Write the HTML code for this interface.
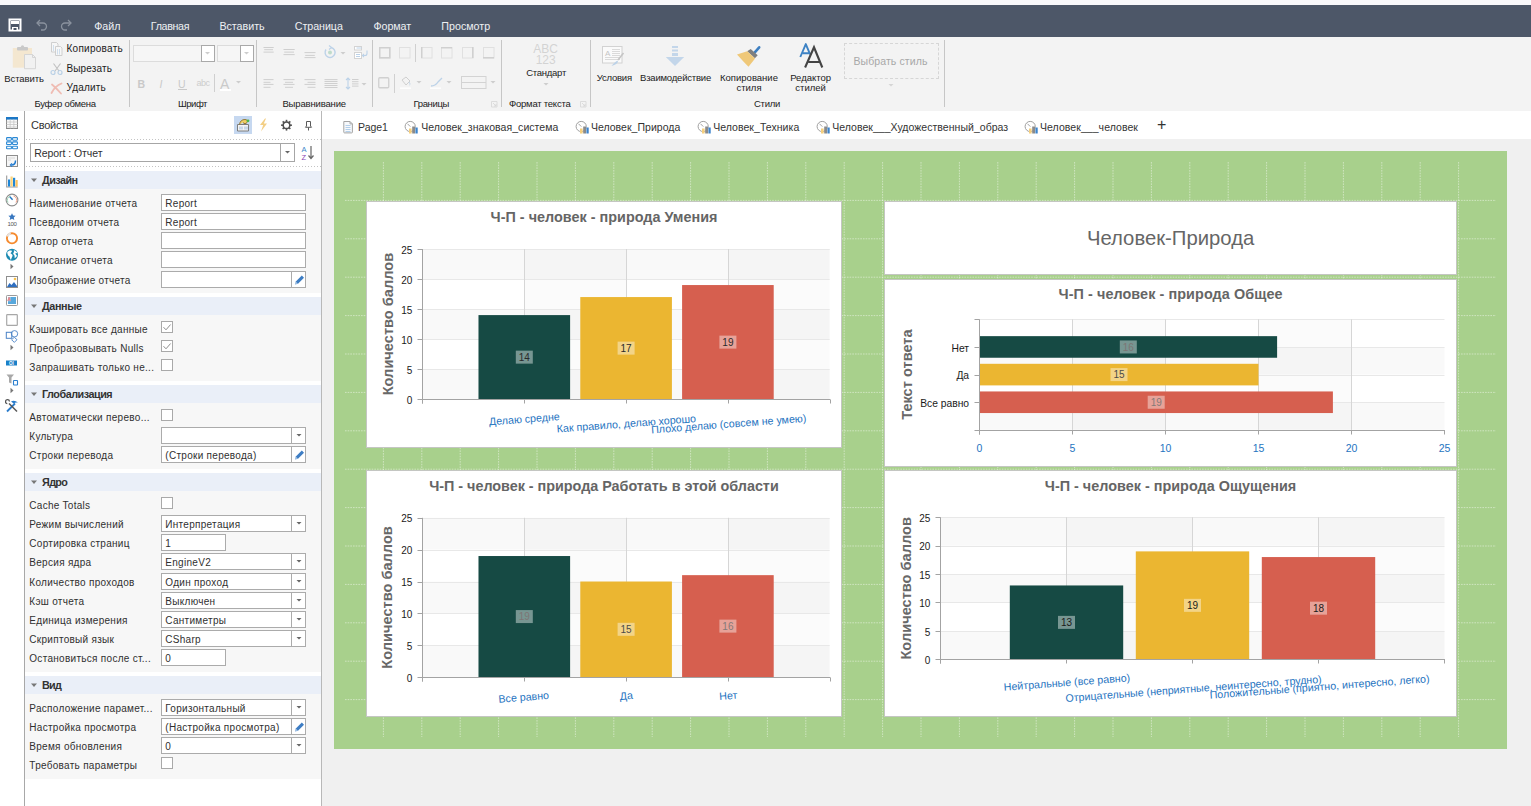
<!DOCTYPE html><html><head><meta charset="utf-8"><style>
*{box-sizing:border-box}
body{margin:0;width:1531px;height:806px;position:relative;overflow:hidden;background:#fff;font-family:"Liberation Sans", sans-serif;}
.a{position:absolute}
.t{position:absolute;white-space:nowrap;line-height:1}
svg text{font-family:"Liberation Sans", sans-serif}
</style></head><body>
<div class="a" style="left:0px;top:0px;width:1531px;height:5px;background:#f8f8fa"></div>
<div class="a" style="left:0px;top:5px;width:1531px;height:32px;background:#4d5768"></div>
<svg class="a" style="left:8px;top:18px;" width="14" height="14" viewBox="0 0 14 14"><path d="M1.5 1.5h11v11h-11z" fill="none" stroke="#fff" stroke-width="2"/><rect x="3" y="3" width="8" height="3" fill="#fff"/><rect x="4" y="9" width="6" height="4" fill="#fff"/><rect x="5.5" y="10" width="3" height="2" fill="#4d5768"/></svg>
<svg class="a" style="left:34px;top:18px;" width="14" height="14" viewBox="0 0 14 14"><path d="M3 5h6a3.5 3.5 0 0 1 0 7h-2" fill="none" stroke="#8a929e" stroke-width="1.3"/><path d="M6 2L3 5l3 3" fill="none" stroke="#8a929e" stroke-width="1.3"/></svg>
<svg class="a" style="left:60px;top:18px;" width="14" height="14" viewBox="0 0 14 14"><path d="M11 5H5a3.5 3.5 0 0 0 0 7h2" fill="none" stroke="#8a929e" stroke-width="1.3"/><path d="M8 2l3 3-3 3" fill="none" stroke="#8a929e" stroke-width="1.3"/></svg>
<div class="t" style="top:20.71px;font-size:10.7px;color:#eef0f3;letter-spacing:-0.070px;left:94.30px;">Файл</div>
<div class="t" style="top:20.71px;font-size:10.7px;color:#eef0f3;letter-spacing:-0.327px;left:150.80px;">Главная</div>
<div class="t" style="top:20.71px;font-size:10.7px;color:#eef0f3;letter-spacing:-0.014px;left:219.40px;">Вставить</div>
<div class="t" style="top:20.71px;font-size:10.7px;color:#eef0f3;letter-spacing:-0.057px;left:294.80px;">Страница</div>
<div class="t" style="top:20.71px;font-size:10.7px;color:#eef0f3;letter-spacing:-0.061px;left:373.50px;">Формат</div>
<div class="t" style="top:20.71px;font-size:10.7px;color:#eef0f3;letter-spacing:0.011px;left:441.30px;">Просмотр</div>
<div class="a" style="left:0px;top:37px;width:1531px;height:74px;background:#f3f3f3"></div>
<div class="a" style="left:129px;top:40px;width:1px;height:67px;background:#c6c6c6"></div>
<div class="a" style="left:256px;top:40px;width:1px;height:67px;background:#c6c6c6"></div>
<div class="a" style="left:372px;top:40px;width:1px;height:67px;background:#c6c6c6"></div>
<div class="a" style="left:501px;top:40px;width:1px;height:67px;background:#c6c6c6"></div>
<div class="a" style="left:590px;top:40px;width:1px;height:67px;background:#c6c6c6"></div>
<div class="a" style="left:944px;top:40px;width:1px;height:67px;background:#c6c6c6"></div>
<div class="t" style="top:74.22px;font-size:9.5px;color:#222;letter-spacing:-0.073px;left:4.20px;">Вставить</div>
<div class="t" style="top:43.60px;font-size:10px;color:#222;letter-spacing:0.266px;left:66.50px;">Копировать</div>
<div class="t" style="top:63.80px;font-size:10px;color:#222;letter-spacing:0.127px;left:66.50px;">Вырезать</div>
<div class="t" style="top:82.70px;font-size:10px;color:#222;letter-spacing:0.188px;left:66.50px;">Удалить</div>
<div class="t" style="top:99.02px;font-size:9.5px;color:#222;letter-spacing:-0.264px;left:34.40px;">Буфер обмена</div>
<div class="t" style="top:99.02px;font-size:9.5px;color:#222;letter-spacing:-0.453px;left:178.00px;">Шрифт</div>
<div class="t" style="top:99.02px;font-size:9.5px;color:#222;letter-spacing:-0.151px;left:282.40px;">Выравнивание</div>
<div class="t" style="top:99.02px;font-size:9.5px;color:#222;letter-spacing:-0.386px;left:413.60px;">Границы</div>
<div class="t" style="top:99.02px;font-size:9.5px;color:#222;letter-spacing:-0.228px;left:509.00px;">Формат текста</div>
<div class="t" style="top:99.02px;font-size:9.5px;color:#222;letter-spacing:-0.275px;left:754.00px;">Стили</div>
<div class="t" style="top:67.83px;font-size:9.5px;color:#222;letter-spacing:-0.261px;left:526.20px;">Стандарт</div>
<div class="t" style="top:73.33px;font-size:9.5px;color:#222;letter-spacing:-0.213px;left:596.80px;">Условия</div>
<div class="t" style="top:73.33px;font-size:9.5px;color:#222;letter-spacing:-0.198px;left:640.00px;">Взаимодействие</div>
<div class="t" style="top:73.33px;font-size:9.5px;color:#222;left:449.00px;width:600px;text-align:center;">Копирование</div>
<div class="t" style="top:83.02px;font-size:9.5px;color:#222;left:449.00px;width:600px;text-align:center;">стиля</div>
<div class="t" style="top:73.33px;font-size:9.5px;color:#222;left:510.60px;width:600px;text-align:center;">Редактор</div>
<div class="t" style="top:83.02px;font-size:9.5px;color:#222;left:510.60px;width:600px;text-align:center;">стилей</div>
<div class="t" style="top:55.78px;font-size:10.5px;color:#a8a8a8;letter-spacing:0.105px;left:853.40px;">Выбрать стиль</div>
<svg class="a" style="left:10px;top:44px;" width="28" height="28" viewBox="0 0 28 28"><rect x="2.8" y="4" width="19.2" height="19.7" fill="#f4e7d0"/><rect x="7" y="3" width="11" height="3.5" rx="1" fill="#c9c9c9"/><circle cx="12.5" cy="2.8" r="1.6" fill="#c9c9c9"/><path d="M14.5 10.5h8l3 3v11.2h-11z" fill="#f1f1f1" stroke="#d5d5d5" stroke-width="1"/><path d="M22.5 10.5v3h3" fill="none" stroke="#d5d5d5"/></svg>
<svg class="a" style="left:50px;top:41px;" width="14" height="15" viewBox="0 0 14 15"><path d="M1.5 1.5h5l1.5 1.5v8h-6.5z" fill="#f7f7f7" stroke="#cfcfcf"/><path d="M5.5 5.5h5l1.5 1.5v7.5h-6.5z" fill="#f7f7f7" stroke="#cfcfcf"/><path d="M3.5 4v6M7.5 8v5.5M9.5 8v5.5" stroke="#c5d8ea" stroke-width="0.8"/></svg>
<svg class="a" style="left:50px;top:62px;" width="14" height="14" viewBox="0 0 14 14"><path d="M3.5 1.5L9 9M10.5 1.5L5 9" stroke="#c0c0c0" stroke-width="1.1"/><circle cx="3" cy="10.5" r="2" fill="none" stroke="#b9d0e6" stroke-width="1.2"/><circle cx="10" cy="10.5" r="2" fill="none" stroke="#b9d0e6" stroke-width="1.2"/></svg>
<svg class="a" style="left:50px;top:82px;" width="13" height="13" viewBox="0 0 13 13"><path d="M1.5 11C4 6 7.5 3 11.5 1.5M2 2.5C5 5 8 8 11 11.5" stroke="#efbcb3" stroke-width="1.8" fill="none" stroke-linecap="round"/></svg>
<div class="a" style="left:132.5px;top:44.5px;width:82px;height:17px;background:#f6f6f6;border:1px solid #dcdcdc"></div>
<div class="a" style="left:201px;top:44.5px;width:14px;height:17px;background:#fff;border:1px solid #a9a9a9"></div>
<div class="a" style="left:216.5px;top:44.5px;width:37px;height:17px;background:#f6f6f6;border:1px solid #dcdcdc"></div>
<div class="a" style="left:240px;top:44.5px;width:14px;height:17px;background:#fff;border:1px solid #a9a9a9"></div>
<svg class="a" style="left:204px;top:51px;" width="8" height="5" viewBox="0 0 8 5"><path d="M1 1h5l-2.5 2.5z" fill="#cdcdcd"/></svg>
<svg class="a" style="left:243px;top:51px;" width="8" height="5" viewBox="0 0 8 5"><path d="M1 1h5l-2.5 2.5z" fill="#cdcdcd"/></svg>
<div class="t" style="top:79.08px;font-size:10.5px;color:#c9c9c9;font-weight:700;left:137.50px;">B</div>
<div class="t" style="top:79.08px;font-size:10.5px;color:#c9c9c9;left:159.50px;font-style:italic">I</div>
<div class="t" style="top:79.08px;font-size:10.5px;color:#c9c9c9;left:178.00px;">U</div>
<div class="a" style="left:178px;top:88.5px;width:9px;height:1px;background:#c9c9c9"></div>
<div class="t" style="top:79.35px;font-size:9px;color:#cdcdcd;letter-spacing:-0.505px;left:196.50px;">abc</div>
<div class="a" style="left:214px;top:74px;width:1px;height:18px;background:#cfcfcf"></div>
<div class="t" style="top:76.60px;font-size:14px;color:#cacaca;left:220.00px;">A</div>
<div class="a" style="left:220px;top:88.5px;width:11px;height:2px;background:#fff"></div>
<svg class="a" style="left:235px;top:80px;" width="8" height="5" viewBox="0 0 8 5"><path d="M1 1h5l-2.5 2.5z" fill="#cdcdcd"/></svg>
<svg class="a" style="left:262.5px;top:46px;" width="14" height="14" viewBox="0 0 14 14"><rect x="0.5" y="1.0" width="10.2" height="1" fill="#cfcfcf"/><rect x="1.2" y="3.2" width="8.8" height="1" fill="#cfcfcf"/><rect x="0.5" y="5.6" width="10.2" height="1" fill="#cfcfcf"/></svg>
<svg class="a" style="left:282.5px;top:46px;" width="14" height="14" viewBox="0 0 14 14"><rect x="0.5" y="3.0" width="11.2" height="1" fill="#cfcfcf"/><rect x="1.2" y="5.6" width="9.8" height="1" fill="#cfcfcf"/><rect x="0.5" y="8.1" width="11.2" height="1" fill="#cfcfcf"/></svg>
<svg class="a" style="left:303.5px;top:46px;" width="14" height="14" viewBox="0 0 14 14"><rect x="0.5" y="6.1" width="11.0" height="1" fill="#cfcfcf"/><rect x="1.2" y="8.9" width="9.6" height="1" fill="#cfcfcf"/><rect x="0.5" y="11.1" width="11.0" height="1" fill="#cfcfcf"/></svg>
<svg class="a" style="left:323px;top:45px;" width="14" height="14" viewBox="0 0 14 14"><path d="M3 4.5A5 5 0 1 0 8 2.5" fill="none" stroke="#bcd2e8" stroke-width="1.4"/><path d="M6 0.5l2.5 2-2.5 2" fill="none" stroke="#bcd2e8" stroke-width="1.2"/><circle cx="7" cy="7.5" r="2" fill="#bfdccb"/></svg>
<svg class="a" style="left:340px;top:51px;" width="7" height="5" viewBox="0 0 7 5"><path d="M0.5 1h5l-2.5 2.5z" fill="#cdcdcd"/></svg>
<svg class="a" style="left:353px;top:45px;" width="16" height="15" viewBox="0 0 16 15"><rect x="1.5" y="1.5" width="7" height="3.5" fill="#fff" stroke="#d3d3d3"/><rect x="1.5" y="7.5" width="7" height="6" fill="#fff" stroke="#d3d3d3"/><path d="M3 9.5h4M3 11.5h4M3.5 3h5" stroke="#bcd2e8"/><path d="M14 5.5v3a2 2 0 0 1-2 2h-2M11 9l-1.5 1.5L11 12" fill="none" stroke="#bcd2e8" stroke-width="1.1"/></svg>
<svg class="a" style="left:262.5px;top:77.5px;" width="14" height="12" viewBox="0 0 14 12"><rect x="0.5" y="1.1" width="10.0" height="1" fill="#cfcfcf"/><rect x="0.5" y="3.8" width="7.0" height="1" fill="#cfcfcf"/><rect x="0.5" y="5.9" width="10.0" height="1" fill="#cfcfcf"/><rect x="0.5" y="8.8" width="7.0" height="1" fill="#cfcfcf"/></svg>
<svg class="a" style="left:282.5px;top:77.5px;" width="14" height="12" viewBox="0 0 14 12"><rect x="0.5" y="1.1" width="11.0" height="1" fill="#cfcfcf"/><rect x="2.0" y="3.8" width="8.0" height="1" fill="#cfcfcf"/><rect x="0.5" y="5.9" width="11.0" height="1" fill="#cfcfcf"/><rect x="2.0" y="8.8" width="8.0" height="1" fill="#cfcfcf"/></svg>
<svg class="a" style="left:303.5px;top:77.5px;" width="14" height="12" viewBox="0 0 14 12"><rect x="0.5" y="1.1" width="11.0" height="1" fill="#cfcfcf"/><rect x="3.5" y="3.8" width="8.0" height="1" fill="#cfcfcf"/><rect x="0.5" y="5.9" width="11.0" height="1" fill="#cfcfcf"/><rect x="3.5" y="8.8" width="8.0" height="1" fill="#cfcfcf"/></svg>
<svg class="a" style="left:323.5px;top:77.5px;" width="15" height="12" viewBox="0 0 15 12"><rect x="0.5" y="1.1" width="13.0" height="1" fill="#cfcfcf"/><rect x="0.5" y="3.0" width="13.0" height="1" fill="#cfcfcf"/><rect x="0.5" y="5.0" width="13.0" height="1" fill="#cfcfcf"/><rect x="0.5" y="7.0" width="13.0" height="1" fill="#cfcfcf"/><rect x="0.5" y="9.0" width="13.0" height="1" fill="#cfcfcf"/></svg>
<svg class="a" style="left:344.5px;top:76.5px;" width="15" height="13" viewBox="0 0 15 13"><path d="M3 1v11M1 3l2-2 2 2M1 10l2 2 2-2" fill="none" stroke="#bcd2e8" stroke-width="1.1"/><rect x="7.0" y="2.0" width="6.5" height="1" fill="#cfcfcf"/><rect x="7.0" y="4.2" width="6.5" height="1" fill="#cfcfcf"/><rect x="7.0" y="6.4" width="6.5" height="1" fill="#cfcfcf"/><rect x="7.0" y="8.6" width="6.5" height="1" fill="#cfcfcf"/></svg>
<svg class="a" style="left:361px;top:82px;" width="7" height="5" viewBox="0 0 7 5"><path d="M0.5 1h5l-2.5 2.5z" fill="#cdcdcd"/></svg>
<svg class="a" style="left:379px;top:46.5px;" width="12" height="12" viewBox="0 0 12 12"><rect x="0.5" y="0.5" width="10.5" height="10.5" fill="none" stroke="#e0e0e0"/></svg>
<svg class="a" style="left:399px;top:46.5px;" width="12" height="12" viewBox="0 0 12 12"><rect x="0.5" y="0.5" width="10.5" height="10.5" fill="none" stroke="#e0e0e0"/></svg>
<svg class="a" style="left:421px;top:46.5px;" width="12" height="12" viewBox="0 0 12 12"><rect x="0.5" y="0.5" width="10.5" height="10.5" fill="none" stroke="#e0e0e0"/></svg>
<svg class="a" style="left:441px;top:46.5px;" width="12" height="12" viewBox="0 0 12 12"><rect x="0.5" y="0.5" width="10.5" height="10.5" fill="none" stroke="#e0e0e0"/></svg>
<svg class="a" style="left:462px;top:46.5px;" width="12" height="12" viewBox="0 0 12 12"><rect x="0.5" y="0.5" width="10.5" height="10.5" fill="none" stroke="#e0e0e0"/></svg>
<svg class="a" style="left:483px;top:46.5px;" width="12" height="12" viewBox="0 0 12 12"><rect x="0.5" y="0.5" width="10.5" height="10.5" fill="none" stroke="#e0e0e0"/></svg>
<svg class="a" style="left:379px;top:46.5px;" width="12" height="12" viewBox="0 0 12 12"><rect x="0.75" y="0.75" width="10" height="10" fill="none" stroke="#d0d0d0" stroke-width="1.5"/></svg>
<svg class="a" style="left:421px;top:46.5px;" width="12" height="12" viewBox="0 0 12 12"><path d="M0.75 0v11" stroke="#d0d0d0" stroke-width="1.5"/></svg>
<svg class="a" style="left:441px;top:46.5px;" width="12" height="12" viewBox="0 0 12 12"><path d="M0 0.75h11" stroke="#d0d0d0" stroke-width="1.5"/></svg>
<svg class="a" style="left:462px;top:46.5px;" width="12" height="12" viewBox="0 0 12 12"><path d="M10.75 0v11" stroke="#d0d0d0" stroke-width="1.5"/></svg>
<svg class="a" style="left:483px;top:46.5px;" width="12" height="12" viewBox="0 0 12 12"><path d="M0 10.75h11" stroke="#d0d0d0" stroke-width="1.5"/></svg>
<div class="a" style="left:415px;top:44px;width:1px;height:18px;background:#d0d0d0"></div>
<svg class="a" style="left:378px;top:76.5px;" width="12" height="12" viewBox="0 0 12 12"><rect x="0.75" y="0.75" width="10" height="10" rx="1" fill="none" stroke="#d0d0d0" stroke-width="1.3"/></svg>
<div class="a" style="left:394px;top:74px;width:1px;height:19px;background:#d0d0d0"></div>
<svg class="a" style="left:399px;top:75.5px;" width="14" height="14" viewBox="0 0 14 14"><path d="M3 4l4-3 4 4-4 4z" fill="none" stroke="#cfcfcf" stroke-width="1"/><path d="M10 6c1 1.5 1.5 2.5 0.5 3" fill="none" stroke="#c5d8ea"/><rect x="1" y="11.5" width="11" height="1.3" fill="#fff"/></svg>
<svg class="a" style="left:416px;top:80px;" width="7" height="5" viewBox="0 0 7 5"><path d="M0.5 1h5l-2.5 2.5z" fill="#cdcdcd"/></svg>
<svg class="a" style="left:429px;top:75.5px;" width="15" height="14" viewBox="0 0 15 14"><path d="M2 10c3 0 5-1 7-4l4-4" fill="none" stroke="#bcd2e8" stroke-width="1.3"/><rect x="1" y="11.5" width="11" height="1.3" fill="#fff"/></svg>
<svg class="a" style="left:446px;top:80px;" width="7" height="5" viewBox="0 0 7 5"><path d="M0.5 1h5l-2.5 2.5z" fill="#cdcdcd"/></svg>
<svg class="a" style="left:460px;top:76px;" width="27" height="13" viewBox="0 0 27 13"><rect x="1.5" y="0.5" width="24.5" height="12" fill="none" stroke="#d3d3d3"/><path d="M1.5 6.5h24.5" stroke="#d3d3d3" stroke-width="1"/></svg>
<svg class="a" style="left:490px;top:80px;" width="7" height="5" viewBox="0 0 7 5"><path d="M0.5 1h5l-2.5 2.5z" fill="#cdcdcd"/></svg>
<svg class="a" style="left:491px;top:101px;" width="7" height="7" viewBox="0 0 7 7"><path d="M0.5 0.5h5.5v5.5h-5.5z" fill="none" stroke="#d5d5d5" stroke-width="0.8"/><path d="M2 2l3 3M5 3v2h-2" fill="none" stroke="#d5d5d5" stroke-width="0.8"/></svg>
<svg class="a" style="left:580px;top:101px;" width="7" height="7" viewBox="0 0 7 7"><path d="M0.5 0.5h5.5v5.5h-5.5z" fill="none" stroke="#d5d5d5" stroke-width="0.8"/><path d="M2 2l3 3M5 3v2h-2" fill="none" stroke="#d5d5d5" stroke-width="0.8"/></svg>
<div class="t" style="top:42.90px;font-size:12px;color:#d3d3d3;left:245.70px;width:600px;text-align:center;">ABC</div>
<div class="t" style="top:54.10px;font-size:12px;color:#d3d3d3;left:245.70px;width:600px;text-align:center;">123</div>
<svg class="a" style="left:543px;top:82px;" width="7" height="5" viewBox="0 0 7 5"><path d="M0.5 1h5l-2.5 2.5z" fill="#cdcdcd"/></svg>
<svg class="a" style="left:600px;top:44px;" width="26" height="24" viewBox="0 0 26 24"><rect x="2.5" y="2.5" width="19.5" height="16.5" fill="#fafafa" stroke="#d2d2d2"/><text x="5" y="11.5" font-size="8" fill="#c5c5c5">A</text><path d="M12 5.5h8M12 7.5h8M12 9.5h8M12 11.5h8M5 13.5h15M5 15.5h15" stroke="#dadada" stroke-width="1"/><path d="M23.5 9L18 16" stroke="#c5c5c5" stroke-width="1.6"/><path d="M17.5 16.5c-1.5 1-3 2-6 5.5 3-1 5-1.5 6.5-4z" fill="#bcd2e8"/></svg>
<svg class="a" style="left:664px;top:44px;" width="22" height="24" viewBox="0 0 22 24"><rect x="8" y="2" width="6" height="2" fill="#c3d6ea"/><rect x="8" y="5.5" width="6" height="2" fill="#c3d6ea"/><rect x="8" y="9" width="6" height="3" fill="#c3d6ea"/><path d="M1.8 13h18.4L11 22z" fill="#c3d6ea"/></svg>
<svg class="a" style="left:735px;top:44px;" width="28" height="26" viewBox="0 0 28 26"><path d="M24.2 3.3L19.8 8.4" stroke="#3d7fc1" stroke-width="2.6" stroke-linecap="round"/><path d="M12.2 7.3l3.5-2.2 7 6.2-2.8 3z" fill="#7f7f7f"/><path d="M2 10.5l10.2-3.2 7.9 7.1-6.6 8.3C10 19.5 6 14.5 2 10.5z" fill="#efc879"/></svg>
<svg class="a" style="left:797px;top:42px;" width="28" height="28" viewBox="0 0 28 28"><path d="M3.3 15L8.8 2.1l4.3 10.3M5.8 11.2h6" fill="none" stroke="#3d82c4" stroke-width="1.9" stroke-linejoin="round"/><path d="M8.1 25.5L17 5.3l8.3 20.2M11.5 20h11" fill="none" stroke="#444" stroke-width="2.1"/></svg>
<div class="a" style="left:843.5px;top:42.5px;width:95px;height:36px;border:1px dashed #d6d6d6"></div>
<svg class="a" style="left:888px;top:83px;" width="7" height="5" viewBox="0 0 7 5"><path d="M0.5 1h5l-2.5 2.5z" fill="#d5d5d5"/></svg>
<div class="a" style="left:24px;top:111px;width:1px;height:695px;background:#a8a8a8"></div>
<div class="a" style="left:321px;top:111px;width:1px;height:695px;background:#b8b8b8"></div>
<div class="t" style="top:120.45px;font-size:11px;color:#333;letter-spacing:-0.239px;left:31.00px;">Свойства</div>
<div class="a" style="left:234px;top:116px;width:18px;height:18px;background:#c6d8f0"></div>
<svg class="a" style="left:236px;top:118px;" width="14" height="14" viewBox="0 0 14 14"><path d="M1.5 6.5h11v6.5h-11z" fill="#f4f4f4" stroke="#7d7d7d" stroke-width="1"/><path d="M4 8.5v3M6 8.5v3M9 8.5v3M11 8.5v3" stroke="#9bb9d9" stroke-width="1"/><path d="M3.5 6.5C4 3 6 1.5 9 1.5c2 0 3 1.5 2 3-1 1.5-3 1.5-4 0" fill="#f0cf63" stroke="#8a6d2a" stroke-width="0.9"/><circle cx="12" cy="2.8" r="1.4" fill="#4cb848"/></svg>
<svg class="a" style="left:257px;top:118px;" width="12" height="14" viewBox="0 0 12 14"><path d="M8 0.5L3 7h3.2L4 13.5 10 5.5H6.8L9 0.5z" fill="#f3cf86"/></svg>
<svg class="a" style="left:280px;top:119px;" width="13" height="13" viewBox="0 0 13 13"><g transform="translate(6.5 6.2)"><circle r="3.3" fill="none" stroke="#505050" stroke-width="1.5"/><rect x="-0.8" y="-5.4" width="1.6" height="2" fill="#505050" transform="rotate(0)"/><rect x="-0.8" y="-5.4" width="1.6" height="2" fill="#505050" transform="rotate(45)"/><rect x="-0.8" y="-5.4" width="1.6" height="2" fill="#505050" transform="rotate(90)"/><rect x="-0.8" y="-5.4" width="1.6" height="2" fill="#505050" transform="rotate(135)"/><rect x="-0.8" y="-5.4" width="1.6" height="2" fill="#505050" transform="rotate(180)"/><rect x="-0.8" y="-5.4" width="1.6" height="2" fill="#505050" transform="rotate(225)"/><rect x="-0.8" y="-5.4" width="1.6" height="2" fill="#505050" transform="rotate(270)"/><rect x="-0.8" y="-5.4" width="1.6" height="2" fill="#505050" transform="rotate(315)"/></g></svg>
<svg class="a" style="left:304px;top:120px;" width="9" height="12" viewBox="0 0 9 12"><path d="M2.5 1.5h4v4.5l1 1.3h-6l1-1.3z" fill="#fff" stroke="#5a5a5a" stroke-width="1"/><path d="M4.5 7.5v3" stroke="#5a5a5a" stroke-width="1"/></svg>
<svg class="a" style="left:25px;top:139px;" width="296" height="1" viewBox="0 0 296 1"><line x1="1" y1="0.5" x2="296" y2="0.5" stroke="#c4c4c4" stroke-width="1" stroke-dasharray="1,2"/></svg>
<svg class="a" style="left:25px;top:166px;" width="296" height="1" viewBox="0 0 296 1"><line x1="1" y1="0.5" x2="296" y2="0.5" stroke="#c4c4c4" stroke-width="1" stroke-dasharray="1,2"/></svg>
<div class="a" style="left:30px;top:143px;width:265px;height:19px;background:#fff;border:1px solid #a6a6a6"></div>
<div class="a" style="left:280px;top:143px;width:1px;height:19px;background:#a6a6a6"></div>
<svg class="a" style="left:284px;top:150px;" width="8" height="5" viewBox="0 0 8 5"><path d="M1 1h5l-2.5 2.5z" fill="#666"/></svg>
<div class="t" style="top:147.88px;font-size:10.5px;color:#303030;letter-spacing:-0.051px;left:34.20px;">Report : Отчет</div>
<svg class="a" style="left:300px;top:144px;" width="16" height="17" viewBox="0 0 16 17"><text x="1.5" y="8" font-size="7.5" fill="#3c86c9">A</text><text x="1.5" y="15.5" font-size="7.5" fill="#8a3fb5">Z</text><path d="M11 2v12M8.5 11.5L11 14.5l2.5-3" fill="none" stroke="#666" stroke-width="1.2"/></svg>
<div class="a" style="left:25px;top:171px;width:296px;height:18px;background:#eaeff8"></div>
<svg class="a" style="left:30px;top:177.8px;" width="8" height="5" viewBox="0 0 8 5"><path d="M1 0.5h6l-3 3.5z" fill="#777"/></svg>
<div class="t" style="top:174.62px;font-size:10.8px;color:#333;font-weight:700;letter-spacing:-0.536px;left:42.00px;">Дизайн</div>
<div class="a" style="left:25px;top:189px;width:296px;height:104px;background:#f7f7f7"></div>
<div class="t" style="top:198.60px;font-size:10px;color:#303030;letter-spacing:0.290px;left:29.30px;">Наименование отчета</div>
<div class="a" style="left:161px;top:194px;width:145px;height:17px;background:#fff;border:1px solid #ababab"></div>
<div class="t" style="top:198.60px;font-size:10px;color:#303030;letter-spacing:0.290px;left:165.30px;">Report</div>
<div class="t" style="top:217.60px;font-size:10px;color:#303030;letter-spacing:0.290px;left:29.30px;">Псевдоним отчета</div>
<div class="a" style="left:161px;top:213px;width:145px;height:17px;background:#fff;border:1px solid #ababab"></div>
<div class="t" style="top:217.60px;font-size:10px;color:#303030;letter-spacing:0.290px;left:165.30px;">Report</div>
<div class="t" style="top:236.60px;font-size:10px;color:#303030;letter-spacing:0.290px;left:29.30px;">Автор отчета</div>
<div class="a" style="left:161px;top:232px;width:145px;height:17px;background:#fff;border:1px solid #ababab"></div>
<div class="t" style="top:255.60px;font-size:10px;color:#303030;letter-spacing:0.290px;left:29.30px;">Описание отчета</div>
<div class="a" style="left:161px;top:251px;width:145px;height:17px;background:#fff;border:1px solid #ababab"></div>
<div class="t" style="top:275.60px;font-size:10px;color:#303030;letter-spacing:0.290px;left:29.30px;">Изображение отчета</div>
<div class="a" style="left:161px;top:271px;width:145px;height:17px;background:#fff;border:1px solid #ababab"></div>
<div class="a" style="left:291px;top:271px;width:1px;height:17px;background:#ababab"></div>
<svg class="a" style="left:292px;top:272.5px;" width="14" height="14" viewBox="0 0 14 14"><path d="M3 11.5l0.8-3 6-6 2.2 2.2-6 6z" fill="#3d7dc4"/><path d="M3 11.5l0.8-3 2.2 2.2z" fill="#fff" opacity="0.5"/></svg>
<div class="a" style="left:25px;top:297px;width:296px;height:18px;background:#eaeff8"></div>
<svg class="a" style="left:30px;top:303.8px;" width="8" height="5" viewBox="0 0 8 5"><path d="M1 0.5h6l-3 3.5z" fill="#777"/></svg>
<div class="t" style="top:300.62px;font-size:10.8px;color:#333;font-weight:700;letter-spacing:-0.378px;left:42.00px;">Данные</div>
<div class="a" style="left:25px;top:315px;width:296px;height:66px;background:#f7f7f7"></div>
<div class="t" style="top:324.60px;font-size:10px;color:#303030;letter-spacing:0.290px;left:29.30px;">Кэшировать все данные</div>
<div class="a" style="left:161px;top:321px;width:12px;height:12px;background:#fff;border:1px solid #a9a9a9"></div>
<svg class="a" style="left:161px;top:321px;" width="12" height="12" viewBox="0 0 12 12"><path d="M2.5 6.2l2.5 2.6 4.6-5.3" fill="none" stroke="#8e8e8e" stroke-width="1"/></svg>
<div class="t" style="top:343.60px;font-size:10px;color:#303030;letter-spacing:0.290px;left:29.30px;">Преобразовывать Nulls</div>
<div class="a" style="left:161px;top:340px;width:12px;height:12px;background:#fff;border:1px solid #a9a9a9"></div>
<svg class="a" style="left:161px;top:340px;" width="12" height="12" viewBox="0 0 12 12"><path d="M2.5 6.2l2.5 2.6 4.6-5.3" fill="none" stroke="#8e8e8e" stroke-width="1"/></svg>
<div class="t" style="top:362.60px;font-size:10px;color:#303030;letter-spacing:0.290px;left:29.30px;">Запрашивать только не...</div>
<div class="a" style="left:161px;top:359px;width:12px;height:12px;background:#fff;border:1px solid #a9a9a9"></div>
<div class="a" style="left:25px;top:385px;width:296px;height:18px;background:#eaeff8"></div>
<svg class="a" style="left:30px;top:391.8px;" width="8" height="5" viewBox="0 0 8 5"><path d="M1 0.5h6l-3 3.5z" fill="#777"/></svg>
<div class="t" style="top:388.62px;font-size:10.8px;color:#333;font-weight:700;letter-spacing:-0.473px;left:42.00px;">Глобализация</div>
<div class="a" style="left:25px;top:403px;width:296px;height:66px;background:#f7f7f7"></div>
<div class="t" style="top:412.60px;font-size:10px;color:#303030;letter-spacing:0.290px;left:29.30px;">Автоматически перево...</div>
<div class="a" style="left:161px;top:409px;width:12px;height:12px;background:#fff;border:1px solid #a9a9a9"></div>
<div class="t" style="top:431.60px;font-size:10px;color:#303030;letter-spacing:0.290px;left:29.30px;">Культура</div>
<div class="a" style="left:161px;top:427px;width:145px;height:17px;background:#fff;border:1px solid #ababab"></div>
<div class="a" style="left:291px;top:427px;width:1px;height:17px;background:#ababab"></div>
<svg class="a" style="left:294.5px;top:433px;" width="9" height="5" viewBox="0 0 9 5"><path d="M1.5 1h5l-2.5 2.5z" fill="#666"/></svg>
<div class="t" style="top:450.60px;font-size:10px;color:#303030;letter-spacing:0.290px;left:29.30px;">Строки перевода</div>
<div class="a" style="left:161px;top:446px;width:145px;height:17px;background:#fff;border:1px solid #ababab"></div>
<div class="a" style="left:291px;top:446px;width:1px;height:17px;background:#ababab"></div>
<svg class="a" style="left:292px;top:447.5px;" width="14" height="14" viewBox="0 0 14 14"><path d="M3 11.5l0.8-3 6-6 2.2 2.2-6 6z" fill="#3d7dc4"/><path d="M3 11.5l0.8-3 2.2 2.2z" fill="#fff" opacity="0.5"/></svg>
<div class="t" style="top:450.60px;font-size:10px;color:#303030;letter-spacing:0.290px;left:165.30px;">(Строки перевода)</div>
<div class="a" style="left:25px;top:473px;width:296px;height:18px;background:#eaeff8"></div>
<svg class="a" style="left:30px;top:479.8px;" width="8" height="5" viewBox="0 0 8 5"><path d="M1 0.5h6l-3 3.5z" fill="#777"/></svg>
<div class="t" style="top:476.62px;font-size:10.8px;color:#333;font-weight:700;letter-spacing:-0.628px;left:42.00px;">Ядро</div>
<div class="a" style="left:25px;top:491px;width:296px;height:181px;background:#f7f7f7"></div>
<div class="t" style="top:500.60px;font-size:10px;color:#303030;letter-spacing:0.290px;left:29.30px;">Cache Totals</div>
<div class="a" style="left:161px;top:497px;width:12px;height:12px;background:#fff;border:1px solid #a9a9a9"></div>
<div class="t" style="top:519.60px;font-size:10px;color:#303030;letter-spacing:0.290px;left:29.30px;">Режим вычислений</div>
<div class="a" style="left:161px;top:515px;width:145px;height:17px;background:#fff;border:1px solid #ababab"></div>
<div class="a" style="left:291px;top:515px;width:1px;height:17px;background:#ababab"></div>
<svg class="a" style="left:294.5px;top:521px;" width="9" height="5" viewBox="0 0 9 5"><path d="M1.5 1h5l-2.5 2.5z" fill="#666"/></svg>
<div class="t" style="top:519.60px;font-size:10px;color:#303030;letter-spacing:0.290px;left:165.30px;">Интерпретация</div>
<div class="t" style="top:538.60px;font-size:10px;color:#303030;letter-spacing:0.290px;left:29.30px;">Сортировка страниц</div>
<div class="a" style="left:161px;top:534px;width:65px;height:17px;background:#fff;border:1px solid #ababab"></div>
<div class="t" style="top:538.60px;font-size:10px;color:#303030;letter-spacing:0.290px;left:165.30px;">1</div>
<div class="t" style="top:557.60px;font-size:10px;color:#303030;letter-spacing:0.290px;left:29.30px;">Версия ядра</div>
<div class="a" style="left:161px;top:553px;width:145px;height:17px;background:#fff;border:1px solid #ababab"></div>
<div class="a" style="left:291px;top:553px;width:1px;height:17px;background:#ababab"></div>
<svg class="a" style="left:294.5px;top:559px;" width="9" height="5" viewBox="0 0 9 5"><path d="M1.5 1h5l-2.5 2.5z" fill="#666"/></svg>
<div class="t" style="top:557.60px;font-size:10px;color:#303030;letter-spacing:0.290px;left:165.30px;">EngineV2</div>
<div class="t" style="top:577.60px;font-size:10px;color:#303030;letter-spacing:0.290px;left:29.30px;">Количество проходов</div>
<div class="a" style="left:161px;top:573px;width:145px;height:17px;background:#fff;border:1px solid #ababab"></div>
<div class="a" style="left:291px;top:573px;width:1px;height:17px;background:#ababab"></div>
<svg class="a" style="left:294.5px;top:579px;" width="9" height="5" viewBox="0 0 9 5"><path d="M1.5 1h5l-2.5 2.5z" fill="#666"/></svg>
<div class="t" style="top:577.60px;font-size:10px;color:#303030;letter-spacing:0.290px;left:165.30px;">Один проход</div>
<div class="t" style="top:596.60px;font-size:10px;color:#303030;letter-spacing:0.290px;left:29.30px;">Кэш отчета</div>
<div class="a" style="left:161px;top:592px;width:145px;height:17px;background:#fff;border:1px solid #ababab"></div>
<div class="a" style="left:291px;top:592px;width:1px;height:17px;background:#ababab"></div>
<svg class="a" style="left:294.5px;top:598px;" width="9" height="5" viewBox="0 0 9 5"><path d="M1.5 1h5l-2.5 2.5z" fill="#666"/></svg>
<div class="t" style="top:596.60px;font-size:10px;color:#303030;letter-spacing:0.290px;left:165.30px;">Выключен</div>
<div class="t" style="top:615.60px;font-size:10px;color:#303030;letter-spacing:0.290px;left:29.30px;">Единица измерения</div>
<div class="a" style="left:161px;top:611px;width:145px;height:17px;background:#fff;border:1px solid #ababab"></div>
<div class="a" style="left:291px;top:611px;width:1px;height:17px;background:#ababab"></div>
<svg class="a" style="left:294.5px;top:617px;" width="9" height="5" viewBox="0 0 9 5"><path d="M1.5 1h5l-2.5 2.5z" fill="#666"/></svg>
<div class="t" style="top:615.60px;font-size:10px;color:#303030;letter-spacing:0.290px;left:165.30px;">Сантиметры</div>
<div class="t" style="top:634.60px;font-size:10px;color:#303030;letter-spacing:0.290px;left:29.30px;">Скриптовый язык</div>
<div class="a" style="left:161px;top:630px;width:145px;height:17px;background:#fff;border:1px solid #ababab"></div>
<div class="a" style="left:291px;top:630px;width:1px;height:17px;background:#ababab"></div>
<svg class="a" style="left:294.5px;top:636px;" width="9" height="5" viewBox="0 0 9 5"><path d="M1.5 1h5l-2.5 2.5z" fill="#666"/></svg>
<div class="t" style="top:634.60px;font-size:10px;color:#303030;letter-spacing:0.290px;left:165.30px;">CSharp</div>
<div class="t" style="top:653.60px;font-size:10px;color:#303030;letter-spacing:0.290px;left:29.30px;">Остановиться после ст...</div>
<div class="a" style="left:161px;top:649px;width:65px;height:17px;background:#fff;border:1px solid #ababab"></div>
<div class="t" style="top:653.60px;font-size:10px;color:#303030;letter-spacing:0.290px;left:165.30px;">0</div>
<div class="a" style="left:25px;top:676px;width:296px;height:18px;background:#eaeff8"></div>
<svg class="a" style="left:30px;top:682.8px;" width="8" height="5" viewBox="0 0 8 5"><path d="M1 0.5h6l-3 3.5z" fill="#777"/></svg>
<div class="t" style="top:679.62px;font-size:10.8px;color:#333;font-weight:700;letter-spacing:-0.766px;left:42.00px;">Вид</div>
<div class="a" style="left:25px;top:694px;width:296px;height:85px;background:#f7f7f7"></div>
<div class="t" style="top:703.60px;font-size:10px;color:#303030;letter-spacing:0.290px;left:29.30px;">Расположение парамет...</div>
<div class="a" style="left:161px;top:699px;width:145px;height:17px;background:#fff;border:1px solid #ababab"></div>
<div class="a" style="left:291px;top:699px;width:1px;height:17px;background:#ababab"></div>
<svg class="a" style="left:294.5px;top:705px;" width="9" height="5" viewBox="0 0 9 5"><path d="M1.5 1h5l-2.5 2.5z" fill="#666"/></svg>
<div class="t" style="top:703.60px;font-size:10px;color:#303030;letter-spacing:0.290px;left:165.30px;">Горизонтальный</div>
<div class="t" style="top:722.60px;font-size:10px;color:#303030;letter-spacing:0.290px;left:29.30px;">Настройка просмотра</div>
<div class="a" style="left:161px;top:718px;width:145px;height:17px;background:#fff;border:1px solid #ababab"></div>
<div class="a" style="left:291px;top:718px;width:1px;height:17px;background:#ababab"></div>
<svg class="a" style="left:292px;top:719.5px;" width="14" height="14" viewBox="0 0 14 14"><path d="M3 11.5l0.8-3 6-6 2.2 2.2-6 6z" fill="#3d7dc4"/><path d="M3 11.5l0.8-3 2.2 2.2z" fill="#fff" opacity="0.5"/></svg>
<div class="t" style="top:722.60px;font-size:10px;color:#303030;letter-spacing:0.290px;left:165.30px;">(Настройка просмотра)</div>
<div class="t" style="top:741.60px;font-size:10px;color:#303030;letter-spacing:0.290px;left:29.30px;">Время обновления</div>
<div class="a" style="left:161px;top:737px;width:145px;height:17px;background:#fff;border:1px solid #ababab"></div>
<div class="a" style="left:291px;top:737px;width:1px;height:17px;background:#ababab"></div>
<svg class="a" style="left:294.5px;top:743px;" width="9" height="5" viewBox="0 0 9 5"><path d="M1.5 1h5l-2.5 2.5z" fill="#666"/></svg>
<div class="t" style="top:741.60px;font-size:10px;color:#303030;letter-spacing:0.290px;left:165.30px;">0</div>
<div class="t" style="top:760.60px;font-size:10px;color:#303030;letter-spacing:0.290px;left:29.30px;">Требовать параметры</div>
<div class="a" style="left:161px;top:757px;width:12px;height:12px;background:#fff;border:1px solid #a9a9a9"></div>
<svg class="a" style="left:5px;top:116px;" width="14" height="14" viewBox="0 0 14 14"><rect x="1.5" y="1.5" width="11" height="11" fill="#fafafa" stroke="#8a8a8a" stroke-width="1"/><rect x="1" y="1" width="12" height="2.6" fill="#1b77c6"/><path d="M1.5 6h11M1.5 8.5h11M1.5 11h11M5.2 3.5v9M8.8 3.5v9" stroke="#c8c8c8" stroke-width="0.8"/></svg>
<svg class="a" style="left:5px;top:136px;" width="14" height="14" viewBox="0 0 14 14"><rect x="1.6" y="1.6" width="4.8" height="2.6" rx="0.6" fill="#fff" stroke="#2a88d4" stroke-width="1.1"/><rect x="1.6" y="5.9" width="4.8" height="2.6" rx="0.6" fill="#fff" stroke="#2a88d4" stroke-width="1.1"/><rect x="1.6" y="10.2" width="4.8" height="2.6" rx="0.6" fill="#fff" stroke="#2a88d4" stroke-width="1.1"/><rect x="7.6" y="1.6" width="4.8" height="2.6" rx="0.6" fill="#fff" stroke="#2a88d4" stroke-width="1.1"/><rect x="7.6" y="5.9" width="4.8" height="2.6" rx="0.6" fill="#fff" stroke="#2a88d4" stroke-width="1.1"/><rect x="7.6" y="10.2" width="4.8" height="2.6" rx="0.6" fill="#fff" stroke="#2a88d4" stroke-width="1.1"/></svg>
<svg class="a" style="left:5px;top:154px;" width="14" height="14" viewBox="0 0 14 14"><rect x="1.5" y="1.5" width="11" height="11" fill="#f6f6f6" stroke="#8e8e8e" stroke-width="1"/><path d="M3 4h7M3 6h3" stroke="#cfcfcf" stroke-width="0.8"/><path d="M10.5 6.5c0 3-1.5 4.5-4 4.5" fill="none" stroke="#1f7ad0" stroke-width="1.5"/><path d="M7 9.3l-1.6 1.7 1.6 1.6" fill="none" stroke="#1f7ad0" stroke-width="1.2"/></svg>
<svg class="a" style="left:5px;top:175px;" width="14" height="13" viewBox="0 0 14 13"><path d="M1.7 0.5v11.5h11" fill="none" stroke="#9a9a9a" stroke-width="1.1"/><rect x="3" y="4.5" width="2.2" height="7" fill="#1f86d6"/><rect x="5.5" y="1.5" width="2.2" height="10" fill="#fcd47c"/><rect x="8" y="2.8" width="2.2" height="8.7" fill="#1f86d6"/><rect x="10.5" y="5" width="2.2" height="6.5" fill="#fcc05a"/></svg>
<svg class="a" style="left:5px;top:193px;" width="14" height="14" viewBox="0 0 14 14"><circle cx="7" cy="7" r="5.9" fill="#fff" stroke="#8e8e8e" stroke-width="1.1"/><path d="M3 9.5A4.3 4.3 0 0 1 5.5 3" fill="none" stroke="#9fd4b8" stroke-width="1"/><path d="M8.5 3A4.3 4.3 0 0 1 11 9.5" fill="none" stroke="#f7a58c" stroke-width="1"/><path d="M4.8 3.8L7.6 6.8" stroke="#1f74c4" stroke-width="1.4"/></svg>
<svg class="a" style="left:5px;top:212px;" width="14" height="16" viewBox="0 0 14 16"><path d="M7 1.2l1.1 2.3 2.5 0.3-1.8 1.7 0.5 2.5L7 6.8 4.7 8l0.5-2.5-1.8-1.7 2.5-0.3z" fill="#3a78c0"/><text x="7" y="14.2" font-size="6" text-anchor="middle" fill="#555" letter-spacing="-0.3">100</text></svg>
<svg class="a" style="left:5px;top:231px;" width="14" height="14" viewBox="0 0 14 14"><circle cx="7" cy="7.3" r="5.1" fill="none" stroke="#f58a2e" stroke-width="1.9"/><path d="M2.3 5.5A5.1 5.1 0 0 1 5.8 2.3" fill="none" stroke="#e2e2e2" stroke-width="2"/></svg>
<svg class="a" style="left:5px;top:248px;" width="14" height="14" viewBox="0 0 14 14"><circle cx="7" cy="6.8" r="6" fill="#1a8ab2"/><path d="M2.2 4.2C3.5 2.5 5.5 2.2 6.8 2.8 7.2 4 6 4.5 5.5 5.2 6.5 5.8 7.8 6.5 7.5 8 7 9.5 6.2 10.5 6 12 5 11 4.8 9.5 4.5 8.5 3.5 8 2.5 7 2.2 4.2z" fill="#fff"/><path d="M8.8 2.2c1.5 0.3 2.8 1.3 3.5 2.6-0.8 0.5-1.5 0.3-2 1 0.6 0.8 1.5 1 1.6 2.2-0.6 1.2-1.5 1.8-2.3 2.2 0-1.2 0.2-2.5-0.5-3.2-0.8-0.5-1.2-1.5-0.6-2.2 0.6-0.6 0.5-1.6 0.3-2.6z" fill="#fff"/></svg>
<svg class="a" style="left:9px;top:263px;" width="6" height="7" viewBox="0 0 6 7"><path d="M1.5 0.8l3 2.7-3 2.7z" fill="#777"/></svg>
<svg class="a" style="left:5px;top:275px;" width="14" height="14" viewBox="0 0 14 14"><rect x="1.5" y="1.5" width="11" height="11" fill="#fff" stroke="#8e8e8e" stroke-width="1"/><circle cx="10" cy="4" r="1.3" fill="#f8c04a"/><path d="M2 12l2.5-4 2 2 2.5-3 3 4v1z" fill="#2f6fc0"/></svg>
<svg class="a" style="left:5px;top:294px;" width="14" height="13" viewBox="0 0 14 13"><rect x="1.5" y="1.5" width="11" height="10" rx="0.8" fill="#fff" stroke="#9a9a9a" stroke-width="1"/><rect x="3" y="3" width="8" height="7" fill="#58a8dc"/><path d="M2.8 7l1.3-3.8L5.4 7M3.3 5.8h1.6" fill="none" stroke="#f04848" stroke-width="0.9"/><rect x="2.5" y="2.5" width="3.5" height="5" fill="#fff" opacity="0.3"/></svg>
<svg class="a" style="left:5px;top:313px;" width="14" height="14" viewBox="0 0 14 14"><rect x="1.7" y="1.7" width="10.6" height="10.6" rx="0.6" fill="#fff" stroke="#a8a8a8" stroke-width="1.2"/></svg>
<svg class="a" style="left:5px;top:329px;" width="14" height="15" viewBox="0 0 14 15"><rect x="1.3" y="3.3" width="5.5" height="6" fill="none" stroke="#4a82c6" stroke-width="1"/><circle cx="9.5" cy="4.8" r="3.2" fill="none" stroke="#4a82c6" stroke-width="0.9"/><path d="M9.3 8.3l2.7 2.4-2.7 2.7-2.7-2.7z" fill="#fff" stroke="#4a82c6" stroke-width="0.9"/></svg>
<svg class="a" style="left:9px;top:344px;" width="6" height="7" viewBox="0 0 6 7"><path d="M1.5 0.8l3 2.7-3 2.7z" fill="#777"/></svg>
<svg class="a" style="left:5px;top:359px;" width="14" height="9" viewBox="0 0 14 9"><rect x="1" y="1.5" width="11" height="5" fill="#1a80c8"/><text x="6.5" y="6" font-size="4.5" font-weight="700" text-anchor="middle" fill="#fff">Ol</text></svg>
<svg class="a" style="left:5px;top:372px;" width="14" height="14" viewBox="0 0 14 14"><path d="M1.5 2.5h7.5l-2.5 3v6l-2.5-1v-5z" fill="#a8a8a8"/><rect x="8.5" y="8.5" width="4" height="4.5" rx="0.5" fill="#fff" stroke="#2a7fcf" stroke-width="1.1"/></svg>
<svg class="a" style="left:9px;top:387px;" width="6" height="7" viewBox="0 0 6 7"><path d="M1.5 0.8l3 2.7-3 2.7z" fill="#777"/></svg>
<svg class="a" style="left:5px;top:399px;" width="14" height="14" viewBox="0 0 14 14"><path d="M2 12.5l8-8" stroke="#2a7ccc" stroke-width="1.8"/><path d="M6 2.5c2-1.5 5-1 7 1.5-2-0.8-3-0.5-4 0.8z" fill="#2a7ccc"/><path d="M12 12.5L4 4.5" stroke="#555" stroke-width="1.4"/><path d="M4.5 2.5A2 2 0 1 0 2.3 4.7" fill="none" stroke="#555" stroke-width="1.3"/></svg>
<div class="a" style="left:322px;top:139px;width:1209px;height:667px;background:#f0f0f0"></div>
<div class="t" style="top:121.58px;font-size:10.5px;color:#333;letter-spacing:-0.135px;left:358.00px;">Page1</div>
<div class="t" style="top:121.58px;font-size:10.5px;color:#333;letter-spacing:0.046px;left:421.20px;">Человек_знаковая_система</div>
<div class="t" style="top:121.58px;font-size:10.5px;color:#333;letter-spacing:0.034px;left:590.90px;">Человек_Природа</div>
<div class="t" style="top:121.58px;font-size:10.5px;color:#333;letter-spacing:0.051px;left:713.20px;">Человек_Техника</div>
<div class="t" style="top:121.58px;font-size:10.5px;color:#333;letter-spacing:0.040px;left:832.20px;">Человек___Художественный_образ</div>
<div class="t" style="top:121.58px;font-size:10.5px;color:#333;letter-spacing:0.062px;left:1040.00px;">Человек___человек</div>
<svg class="a" style="left:342px;top:120px;" width="12" height="14" viewBox="0 0 12 14"><path d="M1.8 1.5h6.2l2.4 2.4v8.3a0.7 0.7 0 0 1-0.7 0.7H2.5a0.7 0.7 0 0 1-0.7-0.7z" fill="#f7f9fc" stroke="#a4a4a4" stroke-width="1"/><path d="M8 1.5v2.4h2.4" fill="none" stroke="#a4a4a4" stroke-width="0.9"/><path d="M3.5 5.5h5M3.5 7.5h5M3.5 9.5h5M3.5 11.5h5" stroke="#b3cfea" stroke-width="1"/></svg>
<svg class="a" style="left:404px;top:120px;" width="15" height="14" viewBox="0 0 15 14"><circle cx="6.2" cy="6.5" r="5.1" fill="#fff" stroke="#a0a0a0" stroke-width="1"/><path d="M3.5 3.8L6.3 6.6" stroke="#999" stroke-width="0.9"/><rect x="5" y="8.5" width="2.6" height="5" fill="#f6cf7d"/><rect x="8.2" y="6.5" width="2.8" height="7" fill="#8a8a8a"/><rect x="11.4" y="7.5" width="2.3" height="6" fill="#3c84cc"/></svg>
<svg class="a" style="left:574.5px;top:120px;" width="15" height="14" viewBox="0 0 15 14"><circle cx="6.2" cy="6.5" r="5.1" fill="#fff" stroke="#a0a0a0" stroke-width="1"/><path d="M3.5 3.8L6.3 6.6" stroke="#999" stroke-width="0.9"/><rect x="5" y="8.5" width="2.6" height="5" fill="#f6cf7d"/><rect x="8.2" y="6.5" width="2.8" height="7" fill="#8a8a8a"/><rect x="11.4" y="7.5" width="2.3" height="6" fill="#3c84cc"/></svg>
<svg class="a" style="left:696.5px;top:120px;" width="15" height="14" viewBox="0 0 15 14"><circle cx="6.2" cy="6.5" r="5.1" fill="#fff" stroke="#a0a0a0" stroke-width="1"/><path d="M3.5 3.8L6.3 6.6" stroke="#999" stroke-width="0.9"/><rect x="5" y="8.5" width="2.6" height="5" fill="#f6cf7d"/><rect x="8.2" y="6.5" width="2.8" height="7" fill="#8a8a8a"/><rect x="11.4" y="7.5" width="2.3" height="6" fill="#3c84cc"/></svg>
<svg class="a" style="left:816px;top:120px;" width="15" height="14" viewBox="0 0 15 14"><circle cx="6.2" cy="6.5" r="5.1" fill="#fff" stroke="#a0a0a0" stroke-width="1"/><path d="M3.5 3.8L6.3 6.6" stroke="#999" stroke-width="0.9"/><rect x="5" y="8.5" width="2.6" height="5" fill="#f6cf7d"/><rect x="8.2" y="6.5" width="2.8" height="7" fill="#8a8a8a"/><rect x="11.4" y="7.5" width="2.3" height="6" fill="#3c84cc"/></svg>
<svg class="a" style="left:1023.5px;top:120px;" width="15" height="14" viewBox="0 0 15 14"><circle cx="6.2" cy="6.5" r="5.1" fill="#fff" stroke="#a0a0a0" stroke-width="1"/><path d="M3.5 3.8L6.3 6.6" stroke="#999" stroke-width="0.9"/><rect x="5" y="8.5" width="2.6" height="5" fill="#f6cf7d"/><rect x="8.2" y="6.5" width="2.8" height="7" fill="#8a8a8a"/><rect x="11.4" y="7.5" width="2.3" height="6" fill="#3c84cc"/></svg>
<div class="t" style="top:117.40px;font-size:16px;color:#333;left:861.70px;width:600px;text-align:center;">+</div>
<div class="a" style="left:334px;top:151px;width:1173px;height:598px;background:#a8d08c"></div>
<svg class="a" style="left:334px;top:151px;" width="1173" height="598" viewBox="0 0 1173 598"><g stroke="#ffffff" stroke-opacity="0.45" stroke-width="1" stroke-dasharray="1.6,1.07"><line x1="49.4" y1="11.0" x2="49.4" y2="586.0"/><line x1="87.8" y1="11.0" x2="87.8" y2="586.0"/><line x1="126.2" y1="11.0" x2="126.2" y2="586.0"/><line x1="164.6" y1="11.0" x2="164.6" y2="586.0"/><line x1="203.0" y1="11.0" x2="203.0" y2="586.0"/><line x1="241.4" y1="11.0" x2="241.4" y2="586.0"/><line x1="279.8" y1="11.0" x2="279.8" y2="586.0"/><line x1="318.2" y1="11.0" x2="318.2" y2="586.0"/><line x1="356.6" y1="11.0" x2="356.6" y2="586.0"/><line x1="395.0" y1="11.0" x2="395.0" y2="586.0"/><line x1="433.4" y1="11.0" x2="433.4" y2="586.0"/><line x1="471.8" y1="11.0" x2="471.8" y2="586.0"/><line x1="510.2" y1="11.0" x2="510.2" y2="586.0"/><line x1="548.6" y1="11.0" x2="548.6" y2="586.0"/><line x1="587.0" y1="11.0" x2="587.0" y2="586.0"/><line x1="625.4" y1="11.0" x2="625.4" y2="586.0"/><line x1="663.8" y1="11.0" x2="663.8" y2="586.0"/><line x1="702.2" y1="11.0" x2="702.2" y2="586.0"/><line x1="740.6" y1="11.0" x2="740.6" y2="586.0"/><line x1="779.0" y1="11.0" x2="779.0" y2="586.0"/><line x1="817.4" y1="11.0" x2="817.4" y2="586.0"/><line x1="855.8" y1="11.0" x2="855.8" y2="586.0"/><line x1="894.2" y1="11.0" x2="894.2" y2="586.0"/><line x1="932.6" y1="11.0" x2="932.6" y2="586.0"/><line x1="971.0" y1="11.0" x2="971.0" y2="586.0"/><line x1="1009.4" y1="11.0" x2="1009.4" y2="586.0"/><line x1="1047.8" y1="11.0" x2="1047.8" y2="586.0"/><line x1="1086.2" y1="11.0" x2="1086.2" y2="586.0"/><line x1="1124.6" y1="11.0" x2="1124.6" y2="586.0"/><line x1="11.0" y1="49.4" x2="1162.0" y2="49.4"/><line x1="11.0" y1="87.8" x2="1162.0" y2="87.8"/><line x1="11.0" y1="126.2" x2="1162.0" y2="126.2"/><line x1="11.0" y1="164.6" x2="1162.0" y2="164.6"/><line x1="11.0" y1="203.0" x2="1162.0" y2="203.0"/><line x1="11.0" y1="241.4" x2="1162.0" y2="241.4"/><line x1="11.0" y1="279.8" x2="1162.0" y2="279.8"/><line x1="11.0" y1="318.2" x2="1162.0" y2="318.2"/><line x1="11.0" y1="356.6" x2="1162.0" y2="356.6"/><line x1="11.0" y1="395.0" x2="1162.0" y2="395.0"/><line x1="11.0" y1="433.4" x2="1162.0" y2="433.4"/><line x1="11.0" y1="471.8" x2="1162.0" y2="471.8"/><line x1="11.0" y1="510.2" x2="1162.0" y2="510.2"/><line x1="11.0" y1="548.6" x2="1162.0" y2="548.6"/></g></svg>
<div class="a" style="left:367px;top:202px;width:474px;height:245px;background:#fff;box-shadow:0 0 0 1px #c4c6c2"></div>
<div class="a" style="left:885px;top:202px;width:571px;height:72px;background:#fff;box-shadow:0 0 0 1px #c4c6c2"></div>
<div class="a" style="left:885px;top:280px;width:571px;height:186px;background:#fff;box-shadow:0 0 0 1px #c4c6c2"></div>
<div class="a" style="left:367px;top:471px;width:474px;height:245px;background:#fff;box-shadow:0 0 0 1px #c4c6c2"></div>
<div class="a" style="left:885px;top:471px;width:571px;height:245px;background:#fff;box-shadow:0 0 0 1px #c4c6c2"></div>
<div class="t" style="top:228.05px;font-size:20.3px;color:#666;left:870.60px;width:600px;text-align:center;">Человек-Природа</div>
<svg class="a" style="left:367px;top:202px" width="474" height="245" viewBox="367 202 474 245"><text x="604.00" y="222.10" text-anchor="middle" font-size="14.4" font-weight="700" fill="#656565" textLength="227" lengthAdjust="spacing">Ч-П - человек - природа Умения</text><rect x="422.50" y="249.00" width="407.20" height="30.04" fill="#000" fill-opacity="0.022"/><rect x="422.50" y="309.08" width="407.20" height="30.04" fill="#000" fill-opacity="0.022"/><rect x="422.50" y="369.16" width="407.20" height="30.04" fill="#000" fill-opacity="0.022"/><rect x="524.30" y="249.00" width="101.80" height="150.20" fill="#000" fill-opacity="0.016"/><rect x="727.90" y="249.00" width="101.80" height="150.20" fill="#000" fill-opacity="0.016"/><line x1="422.50" y1="249.50" x2="829.70" y2="249.50" stroke="#e8e8e8" stroke-width="1"/><line x1="422.50" y1="279.50" x2="829.70" y2="279.50" stroke="#e8e8e8" stroke-width="1"/><line x1="422.50" y1="309.50" x2="829.70" y2="309.50" stroke="#e8e8e8" stroke-width="1"/><line x1="422.50" y1="339.50" x2="829.70" y2="339.50" stroke="#e8e8e8" stroke-width="1"/><line x1="422.50" y1="369.50" x2="829.70" y2="369.50" stroke="#e8e8e8" stroke-width="1"/><line x1="524.50" y1="249.00" x2="524.50" y2="399.20" stroke="#d6d6d6" stroke-width="1"/><line x1="626.50" y1="249.00" x2="626.50" y2="399.20" stroke="#d6d6d6" stroke-width="1"/><line x1="728.50" y1="249.00" x2="728.50" y2="399.20" stroke="#d6d6d6" stroke-width="1"/><rect x="478.49" y="315.09" width="91.62" height="84.11" fill="#164a44"/><rect x="515.80" y="350.64" width="17" height="13" fill="#fff" fill-opacity="0.42"/><text x="524.30" y="360.74" text-anchor="middle" font-size="10" fill="#2a2a2a">14</text><rect x="580.29" y="297.06" width="91.62" height="102.14" fill="#ebb631"/><rect x="617.60" y="341.63" width="17" height="13" fill="#fff" fill-opacity="0.42"/><text x="626.10" y="351.73" text-anchor="middle" font-size="10" fill="#2a2a2a">17</text><rect x="682.09" y="285.05" width="91.62" height="114.15" fill="#d65f4f"/><rect x="719.40" y="335.62" width="17" height="13" fill="#fff" fill-opacity="0.42"/><text x="727.90" y="345.72" text-anchor="middle" font-size="10" fill="#2a2a2a">19</text><line x1="422.50" y1="249.00" x2="422.50" y2="403.50" stroke="#a3a3a3" stroke-width="1"/><line x1="417.50" y1="399.50" x2="830.20" y2="399.50" stroke="#a3a3a3" stroke-width="1"/><line x1="422.50" y1="399.50" x2="422.50" y2="403.50" stroke="#a3a3a3" stroke-width="1"/><line x1="524.50" y1="399.50" x2="524.50" y2="403.50" stroke="#a3a3a3" stroke-width="1"/><line x1="626.50" y1="399.50" x2="626.50" y2="403.50" stroke="#a3a3a3" stroke-width="1"/><line x1="728.50" y1="399.50" x2="728.50" y2="403.50" stroke="#a3a3a3" stroke-width="1"/><line x1="830.50" y1="399.50" x2="830.50" y2="403.50" stroke="#a3a3a3" stroke-width="1"/><line x1="417.50" y1="249.50" x2="422.50" y2="249.50" stroke="#a3a3a3" stroke-width="1"/><line x1="417.50" y1="279.50" x2="422.50" y2="279.50" stroke="#a3a3a3" stroke-width="1"/><line x1="417.50" y1="309.50" x2="422.50" y2="309.50" stroke="#a3a3a3" stroke-width="1"/><line x1="417.50" y1="339.50" x2="422.50" y2="339.50" stroke="#a3a3a3" stroke-width="1"/><line x1="417.50" y1="369.50" x2="422.50" y2="369.50" stroke="#a3a3a3" stroke-width="1"/><text x="412.40" y="403.80" text-anchor="end" font-size="10" fill="#1a1a1a">0</text><text x="412.40" y="373.76" text-anchor="end" font-size="10" fill="#1a1a1a">5</text><text x="412.40" y="343.72" text-anchor="end" font-size="10" fill="#1a1a1a">10</text><text x="412.40" y="313.68" text-anchor="end" font-size="10" fill="#1a1a1a">15</text><text x="412.40" y="283.64" text-anchor="end" font-size="10" fill="#1a1a1a">20</text><text x="412.40" y="253.60" text-anchor="end" font-size="10" fill="#1a1a1a">25</text><text transform="translate(392.90 324.10) rotate(-90)" x="0" y="0" text-anchor="middle" font-size="14.6" font-weight="700" fill="#686868">Количество баллов</text><text transform="translate(524.60 422.70) rotate(-4.3)" x="0" y="0" text-anchor="middle" font-size="10.67" fill="#1f74bf">Делаю средне</text><text transform="translate(626.60 427.30) rotate(-4.3)" x="0" y="0" text-anchor="middle" font-size="10.67" fill="#1f74bf">Как правило, делаю хорошо</text><text transform="translate(729.00 427.60) rotate(-4.3)" x="0" y="0" text-anchor="middle" font-size="10.67" fill="#1f74bf">Плохо делаю (совсем не умею)</text></svg>
<svg class="a" style="left:367px;top:471px" width="474" height="245" viewBox="367 471 474 245"><text x="604.00" y="491.00" text-anchor="middle" font-size="14.4" font-weight="700" fill="#656565" textLength="349.5" lengthAdjust="spacing">Ч-П - человек - природа Работать в этой области</text><rect x="422.50" y="517.80" width="407.20" height="31.86" fill="#000" fill-opacity="0.022"/><rect x="422.50" y="581.52" width="407.20" height="31.86" fill="#000" fill-opacity="0.022"/><rect x="422.50" y="645.24" width="407.20" height="31.86" fill="#000" fill-opacity="0.022"/><rect x="524.30" y="517.80" width="101.80" height="159.30" fill="#000" fill-opacity="0.016"/><rect x="727.90" y="517.80" width="101.80" height="159.30" fill="#000" fill-opacity="0.016"/><line x1="422.50" y1="518.50" x2="829.70" y2="518.50" stroke="#e8e8e8" stroke-width="1"/><line x1="422.50" y1="550.50" x2="829.70" y2="550.50" stroke="#e8e8e8" stroke-width="1"/><line x1="422.50" y1="582.50" x2="829.70" y2="582.50" stroke="#e8e8e8" stroke-width="1"/><line x1="422.50" y1="613.50" x2="829.70" y2="613.50" stroke="#e8e8e8" stroke-width="1"/><line x1="422.50" y1="645.50" x2="829.70" y2="645.50" stroke="#e8e8e8" stroke-width="1"/><line x1="524.50" y1="517.80" x2="524.50" y2="677.10" stroke="#d6d6d6" stroke-width="1"/><line x1="626.50" y1="517.80" x2="626.50" y2="677.10" stroke="#d6d6d6" stroke-width="1"/><line x1="728.50" y1="517.80" x2="728.50" y2="677.10" stroke="#d6d6d6" stroke-width="1"/><rect x="478.49" y="556.03" width="91.62" height="121.07" fill="#164a44"/><rect x="515.80" y="610.07" width="17" height="13" fill="#fff" fill-opacity="0.42"/><text x="524.30" y="620.17" text-anchor="middle" font-size="10" fill="#7d7575">19</text><rect x="580.29" y="581.52" width="91.62" height="95.58" fill="#ebb631"/><rect x="617.60" y="622.81" width="17" height="13" fill="#fff" fill-opacity="0.42"/><text x="626.10" y="632.91" text-anchor="middle" font-size="10" fill="#4a4a4a">15</text><rect x="682.09" y="575.15" width="91.62" height="101.95" fill="#d65f4f"/><rect x="719.40" y="619.62" width="17" height="13" fill="#fff" fill-opacity="0.42"/><text x="727.90" y="629.72" text-anchor="middle" font-size="10" fill="#857a78">16</text><line x1="422.50" y1="517.80" x2="422.50" y2="681.50" stroke="#a3a3a3" stroke-width="1"/><line x1="417.50" y1="677.50" x2="830.20" y2="677.50" stroke="#a3a3a3" stroke-width="1"/><line x1="422.50" y1="677.50" x2="422.50" y2="681.50" stroke="#a3a3a3" stroke-width="1"/><line x1="524.50" y1="677.50" x2="524.50" y2="681.50" stroke="#a3a3a3" stroke-width="1"/><line x1="626.50" y1="677.50" x2="626.50" y2="681.50" stroke="#a3a3a3" stroke-width="1"/><line x1="728.50" y1="677.50" x2="728.50" y2="681.50" stroke="#a3a3a3" stroke-width="1"/><line x1="830.50" y1="677.50" x2="830.50" y2="681.50" stroke="#a3a3a3" stroke-width="1"/><line x1="417.50" y1="518.50" x2="422.50" y2="518.50" stroke="#a3a3a3" stroke-width="1"/><line x1="417.50" y1="550.50" x2="422.50" y2="550.50" stroke="#a3a3a3" stroke-width="1"/><line x1="417.50" y1="582.50" x2="422.50" y2="582.50" stroke="#a3a3a3" stroke-width="1"/><line x1="417.50" y1="613.50" x2="422.50" y2="613.50" stroke="#a3a3a3" stroke-width="1"/><line x1="417.50" y1="645.50" x2="422.50" y2="645.50" stroke="#a3a3a3" stroke-width="1"/><text x="412.40" y="681.70" text-anchor="end" font-size="10" fill="#1a1a1a">0</text><text x="412.40" y="649.84" text-anchor="end" font-size="10" fill="#1a1a1a">5</text><text x="412.40" y="617.98" text-anchor="end" font-size="10" fill="#1a1a1a">10</text><text x="412.40" y="586.12" text-anchor="end" font-size="10" fill="#1a1a1a">15</text><text x="412.40" y="554.26" text-anchor="end" font-size="10" fill="#1a1a1a">20</text><text x="412.40" y="522.40" text-anchor="end" font-size="10" fill="#1a1a1a">25</text><text transform="translate(392.10 597.45) rotate(-90)" x="0" y="0" text-anchor="middle" font-size="14.6" font-weight="700" fill="#686868">Количество баллов</text><text transform="translate(524.00 700.80) rotate(-4.3)" x="0" y="0" text-anchor="middle" font-size="10.67" fill="#1f74bf">Все равно</text><text transform="translate(626.60 699.40) rotate(-4.3)" x="0" y="0" text-anchor="middle" font-size="10.67" fill="#1f74bf">Да</text><text transform="translate(728.60 699.40) rotate(-4.3)" x="0" y="0" text-anchor="middle" font-size="10.67" fill="#1f74bf">Нет</text></svg>
<svg class="a" style="left:885px;top:471px" width="571" height="245" viewBox="885 471 571 245"><text x="1170.50" y="491.00" text-anchor="middle" font-size="14.4" font-weight="700" fill="#656565" textLength="251.5" lengthAdjust="spacing">Ч-П - человек - природа Ощущения</text><rect x="940.50" y="517.30" width="504.00" height="28.40" fill="#000" fill-opacity="0.022"/><rect x="940.50" y="574.10" width="504.00" height="28.40" fill="#000" fill-opacity="0.022"/><rect x="940.50" y="630.90" width="504.00" height="28.40" fill="#000" fill-opacity="0.022"/><rect x="1066.50" y="517.30" width="126.00" height="142.00" fill="#000" fill-opacity="0.016"/><rect x="1318.50" y="517.30" width="126.00" height="142.00" fill="#000" fill-opacity="0.016"/><line x1="940.50" y1="517.50" x2="1444.50" y2="517.50" stroke="#e8e8e8" stroke-width="1"/><line x1="940.50" y1="546.50" x2="1444.50" y2="546.50" stroke="#e8e8e8" stroke-width="1"/><line x1="940.50" y1="574.50" x2="1444.50" y2="574.50" stroke="#e8e8e8" stroke-width="1"/><line x1="940.50" y1="602.50" x2="1444.50" y2="602.50" stroke="#e8e8e8" stroke-width="1"/><line x1="940.50" y1="631.50" x2="1444.50" y2="631.50" stroke="#e8e8e8" stroke-width="1"/><line x1="1066.50" y1="517.30" x2="1066.50" y2="659.30" stroke="#d6d6d6" stroke-width="1"/><line x1="1192.50" y1="517.30" x2="1192.50" y2="659.30" stroke="#d6d6d6" stroke-width="1"/><line x1="1318.50" y1="517.30" x2="1318.50" y2="659.30" stroke="#d6d6d6" stroke-width="1"/><rect x="1009.80" y="585.46" width="113.40" height="73.84" fill="#164a44"/><rect x="1058.00" y="615.88" width="17" height="13" fill="#fff" fill-opacity="0.42"/><text x="1066.50" y="625.98" text-anchor="middle" font-size="10" fill="#1a1a1a">13</text><rect x="1135.80" y="551.38" width="113.40" height="107.92" fill="#ebb631"/><rect x="1184.00" y="598.84" width="17" height="13" fill="#fff" fill-opacity="0.42"/><text x="1192.50" y="608.94" text-anchor="middle" font-size="10" fill="#1a1a1a">19</text><rect x="1261.80" y="557.06" width="113.40" height="102.24" fill="#d65f4f"/><rect x="1310.00" y="601.68" width="17" height="13" fill="#fff" fill-opacity="0.42"/><text x="1318.50" y="611.78" text-anchor="middle" font-size="10" fill="#1a1a1a">18</text><line x1="940.50" y1="517.30" x2="940.50" y2="663.50" stroke="#a3a3a3" stroke-width="1"/><line x1="935.50" y1="659.50" x2="1445.00" y2="659.50" stroke="#a3a3a3" stroke-width="1"/><line x1="940.50" y1="659.50" x2="940.50" y2="663.50" stroke="#a3a3a3" stroke-width="1"/><line x1="1066.50" y1="659.50" x2="1066.50" y2="663.50" stroke="#a3a3a3" stroke-width="1"/><line x1="1192.50" y1="659.50" x2="1192.50" y2="663.50" stroke="#a3a3a3" stroke-width="1"/><line x1="1318.50" y1="659.50" x2="1318.50" y2="663.50" stroke="#a3a3a3" stroke-width="1"/><line x1="1444.50" y1="659.50" x2="1444.50" y2="663.50" stroke="#a3a3a3" stroke-width="1"/><line x1="935.50" y1="517.50" x2="940.50" y2="517.50" stroke="#a3a3a3" stroke-width="1"/><line x1="935.50" y1="546.50" x2="940.50" y2="546.50" stroke="#a3a3a3" stroke-width="1"/><line x1="935.50" y1="574.50" x2="940.50" y2="574.50" stroke="#a3a3a3" stroke-width="1"/><line x1="935.50" y1="602.50" x2="940.50" y2="602.50" stroke="#a3a3a3" stroke-width="1"/><line x1="935.50" y1="631.50" x2="940.50" y2="631.50" stroke="#a3a3a3" stroke-width="1"/><text x="930.40" y="663.90" text-anchor="end" font-size="10" fill="#1a1a1a">0</text><text x="930.40" y="635.50" text-anchor="end" font-size="10" fill="#1a1a1a">5</text><text x="930.40" y="607.10" text-anchor="end" font-size="10" fill="#1a1a1a">10</text><text x="930.40" y="578.70" text-anchor="end" font-size="10" fill="#1a1a1a">15</text><text x="930.40" y="550.30" text-anchor="end" font-size="10" fill="#1a1a1a">20</text><text x="930.40" y="521.90" text-anchor="end" font-size="10" fill="#1a1a1a">25</text><text transform="translate(910.50 588.30) rotate(-90)" x="0" y="0" text-anchor="middle" font-size="14.6" font-weight="700" fill="#686868">Количество баллов</text><text transform="translate(1067.20 686.00) rotate(-4.3)" x="0" y="0" text-anchor="middle" font-size="10.67" fill="#1f74bf">Нейтральные (все равно)</text><text transform="translate(1193.80 692.30) rotate(-4.3)" x="0" y="0" text-anchor="middle" font-size="10.67" fill="#1f74bf">Отрицательные (неприятные, неинтересно, трудно)</text><text transform="translate(1319.80 690.50) rotate(-4.3)" x="0" y="0" text-anchor="middle" font-size="10.67" fill="#1f74bf">Положительные (приятно, интересно, легко)</text></svg>
<svg class="a" style="left:885px;top:280px" width="571" height="186" viewBox="885 280 571 186"><text x="1170.50" y="299.20" text-anchor="middle" font-size="14.4" font-weight="700" fill="#656565" textLength="224" lengthAdjust="spacing">Ч-П - человек - природа Общее</text><rect x="979.50" y="346.95" width="465.00" height="27.65" fill="#000" fill-opacity="0.022"/><rect x="979.50" y="402.25" width="465.00" height="27.65" fill="#000" fill-opacity="0.022"/><rect x="1072.50" y="319.30" width="93.00" height="110.60" fill="#000" fill-opacity="0.016"/><rect x="1258.50" y="319.30" width="93.00" height="110.60" fill="#000" fill-opacity="0.016"/><line x1="979.50" y1="319.50" x2="1444.50" y2="319.50" stroke="#e8e8e8" stroke-width="1"/><line x1="979.50" y1="347.50" x2="1444.50" y2="347.50" stroke="#e8e8e8" stroke-width="1"/><line x1="979.50" y1="375.50" x2="1444.50" y2="375.50" stroke="#e8e8e8" stroke-width="1"/><line x1="979.50" y1="402.50" x2="1444.50" y2="402.50" stroke="#e8e8e8" stroke-width="1"/><line x1="1072.50" y1="319.30" x2="1072.50" y2="429.90" stroke="#d6d6d6" stroke-width="1"/><line x1="1165.50" y1="319.30" x2="1165.50" y2="429.90" stroke="#d6d6d6" stroke-width="1"/><line x1="1258.50" y1="319.30" x2="1258.50" y2="429.90" stroke="#d6d6d6" stroke-width="1"/><line x1="1351.50" y1="319.30" x2="1351.50" y2="429.90" stroke="#d6d6d6" stroke-width="1"/><rect x="979.50" y="336.15" width="297.60" height="21.60" fill="#164a44"/><rect x="1119.80" y="340.45" width="17" height="13" fill="#fff" fill-opacity="0.42"/><text x="1128.30" y="350.55" text-anchor="middle" font-size="10" fill="#7d7575">16</text><rect x="979.50" y="363.80" width="279.00" height="21.60" fill="#ebb631"/><rect x="1110.50" y="368.10" width="17" height="13" fill="#fff" fill-opacity="0.42"/><text x="1119.00" y="378.20" text-anchor="middle" font-size="10" fill="#4a4a4a">15</text><rect x="979.50" y="391.45" width="353.40" height="21.60" fill="#d65f4f"/><rect x="1147.70" y="395.75" width="17" height="13" fill="#fff" fill-opacity="0.42"/><text x="1156.20" y="405.85" text-anchor="middle" font-size="10" fill="#857a78">19</text><line x1="979.50" y1="319.30" x2="979.50" y2="434.50" stroke="#a3a3a3" stroke-width="1"/><line x1="974.50" y1="430.50" x2="1445.00" y2="430.50" stroke="#a3a3a3" stroke-width="1"/><line x1="974.50" y1="319.50" x2="979.50" y2="319.50" stroke="#a3a3a3" stroke-width="1"/><line x1="974.50" y1="347.50" x2="979.50" y2="347.50" stroke="#a3a3a3" stroke-width="1"/><line x1="974.50" y1="375.50" x2="979.50" y2="375.50" stroke="#a3a3a3" stroke-width="1"/><line x1="974.50" y1="402.50" x2="979.50" y2="402.50" stroke="#a3a3a3" stroke-width="1"/><line x1="979.50" y1="430.50" x2="979.50" y2="434.50" stroke="#a3a3a3" stroke-width="1"/><text x="979.50" y="452.10" text-anchor="middle" font-size="10.5" fill="#1f74bf">0</text><line x1="1072.50" y1="430.50" x2="1072.50" y2="434.50" stroke="#a3a3a3" stroke-width="1"/><text x="1072.50" y="452.10" text-anchor="middle" font-size="10.5" fill="#1f74bf">5</text><line x1="1165.50" y1="430.50" x2="1165.50" y2="434.50" stroke="#a3a3a3" stroke-width="1"/><text x="1165.50" y="452.10" text-anchor="middle" font-size="10.5" fill="#1f74bf">10</text><line x1="1258.50" y1="430.50" x2="1258.50" y2="434.50" stroke="#a3a3a3" stroke-width="1"/><text x="1258.50" y="452.10" text-anchor="middle" font-size="10.5" fill="#1f74bf">15</text><line x1="1351.50" y1="430.50" x2="1351.50" y2="434.50" stroke="#a3a3a3" stroke-width="1"/><text x="1351.50" y="452.10" text-anchor="middle" font-size="10.5" fill="#1f74bf">20</text><line x1="1444.50" y1="430.50" x2="1444.50" y2="434.50" stroke="#a3a3a3" stroke-width="1"/><text x="1444.50" y="452.10" text-anchor="middle" font-size="10.5" fill="#1f74bf">25</text><text x="969.10" y="351.55" text-anchor="end" font-size="10.3" fill="#1a1a1a">Нет</text><text x="969.10" y="379.20" text-anchor="end" font-size="10.3" fill="#1a1a1a">Да</text><text x="969.10" y="406.85" text-anchor="end" font-size="10.3" fill="#1a1a1a">Все равно</text><text transform="translate(912.20 374.60) rotate(-90)" x="0" y="0" text-anchor="middle" font-size="14.6" font-weight="700" fill="#686868">Текст ответа</text></svg>
</body></html>
